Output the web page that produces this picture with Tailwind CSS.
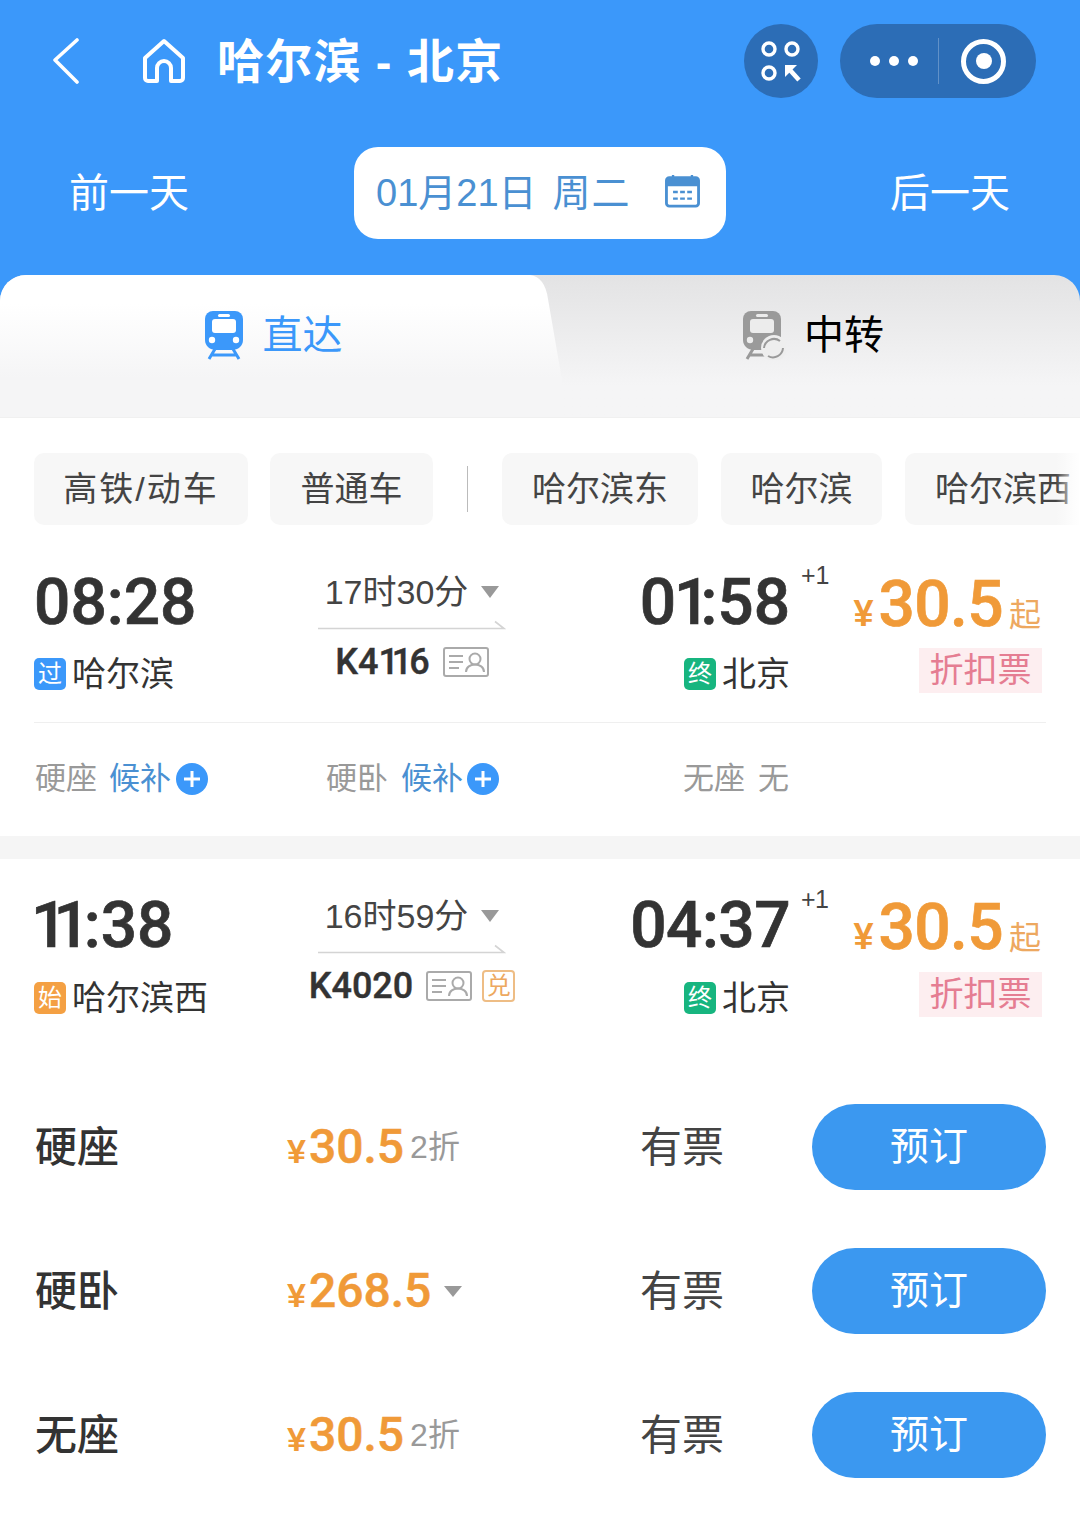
<!DOCTYPE html>
<html lang="zh-CN">
<head>
    <meta charset="UTF-8">
    <meta name="viewport" content="width=device-width, initial-scale=1.0">
    <title>哈尔滨 - 北京</title>
    <script src="https://cdn.jsdelivr.net/npm/@tailwindcss/browser@4"></script>
</head>
<body class="bg-white font-['Liberation_Sans','Noto_Sans_CJK_SC',sans-serif] text-[#333]">
<div class="w-[1080px] h-[1526px] overflow-hidden">

    <!-- blue header -->
    <header class="bg-[#3b98fa] h-[275px] pt-[24px]">
        <div class="flex items-center h-[74px] pl-[52px] pr-[44px]">
            <svg class="w-[28px] h-[46px]" viewBox="0 0 28 46" fill="none" stroke="#fff" stroke-width="3.6" stroke-linecap="round" stroke-linejoin="round"><path d="M25 2 3 22l22 22"/></svg>
            <svg class="ml-[61px] w-[46px] h-[46px]" viewBox="0 0 46 46" fill="none" stroke="#fff" stroke-width="4" stroke-linejoin="round" stroke-linecap="round"><path d="M23 3 4 20v20a3 3 0 0 0 3 3h9V30a7 7 0 0 1 14 0v13h9a3 3 0 0 0 3-3V20Z"/></svg>
            <h1 class="ml-[30px] text-[47px] font-bold text-white leading-none tracking-[1.2px] whitespace-pre">哈尔滨 - 北京</h1>
            <div class="ml-auto flex items-center gap-[22px]">
                <div class="w-[74px] h-[74px] rounded-full bg-[#2c6db6] flex items-center justify-center">
                    <svg class="w-[44px] h-[44px]" viewBox="0 0 44 44" fill="none" stroke="#fff" stroke-width="3.4">
                        <circle cx="10" cy="10" r="6"/><circle cx="33" cy="10" r="6"/><circle cx="10" cy="34" r="6"/>
                        <path d="M26 26h12L26 38Z" fill="#fff" stroke="none"/>
                        <path d="M30 30l10 11" stroke-width="4.6"/>
                    </svg>
                </div>
                <div class="w-[196px] h-[74px] rounded-full bg-[#2c6db6] flex items-center">
                    <div class="w-[98px] flex justify-center gap-[9px] pl-[10px]">
                        <span class="w-[10px] h-[10px] rounded-full bg-white"></span>
                        <span class="w-[10px] h-[10px] rounded-full bg-white"></span>
                        <span class="w-[10px] h-[10px] rounded-full bg-white"></span>
                    </div>
                    <span class="w-px h-[46px] bg-white/25"></span>
                    <div class="flex-1 flex justify-center pr-[8px]">
                        <span class="w-[45px] h-[45px] rounded-full border-[5px] border-white flex items-center justify-center">
                            <span class="w-[16px] h-[16px] rounded-full bg-white"></span>
                        </span>
                    </div>
                </div>
            </div>
        </div>
        <div class="flex items-center justify-between mt-[49px] pl-[69px] pr-[70px]">
            <span class="text-[40px] text-white w-[121px]">前一天</span>
            <div class="w-[372px] h-[92px] rounded-[24px] bg-white flex items-center pl-[22px] text-[#4a90d2] text-[38px]">
                <span>01月21日</span>
                <span class="ml-[16px] tracking-[1px]">周二</span>
                <svg class="ml-[33px] mb-[4px] w-[37px] h-[34px]" viewBox="0 0 38 36" fill="none">
                    <rect x="2" y="4" width="34" height="30" rx="3" stroke="#4a90d2" stroke-width="3"/>
                    <path d="M2 5h34v8H2z" fill="#4a90d2"/>
                    <path d="M9 1v5M29 1v5" stroke="#4a90d2" stroke-width="2.5"/>
                    <path d="M9 19h20M9 26h20" stroke="#4a90d2" stroke-width="2.5" stroke-dasharray="5 2.5"/>
                </svg>
            </div>
            <span class="text-[40px] text-white w-[120px]">后一天</span>
        </div>
    </header>

    <!-- tabs -->
    <div class="bg-[#3b98fa]">
        <div class="relative h-[143px] rounded-t-[26px] overflow-hidden bg-gradient-to-b from-[#e3e3e4] to-[#f5f5f6] to-[78%] border-b border-[#f0f0f0]">
            <svg class="absolute left-0 top-0 w-[570px] h-[143px]" viewBox="0 0 570 143">
                <defs><linearGradient id="activeTab" x1="0" y1="0" x2="0" y2="1"><stop offset="0" stop-color="#fff"/><stop offset=".2" stop-color="#fff"/><stop offset=".72" stop-color="#f5f5f6"/></linearGradient></defs>
                <path d="M0 0H530Q545 2 548 24L562 105V143H0Z" fill="url(#activeTab)"/>
            </svg>
            <div class="relative grid grid-cols-[546px_534px] pt-[36px]">
                <div class="flex items-center justify-center gap-[19px] h-[48px]">
                    <svg class="w-[40px] h-[49px]" viewBox="0 0 40 49">
                        <path d="M9 0h22a8 8 0 0 1 8 8v21c0 6-5 10-11 10H12C6 39 1 35 1 29V8a8 8 0 0 1 8-8Z" fill="#3b98fa"/>
                        <rect x="8" y="8" width="24" height="14" rx="3" fill="#fff"/>
                        <rect x="14" y="3" width="12" height="3" rx="1.5" fill="#fff"/>
                        <circle cx="8" cy="29" r="3.2" fill="#fff"/><circle cx="32" cy="29" r="3.2" fill="#fff"/>
                        <path d="M11 38 5 48M29 38l6 10M8 44h24" stroke="#3b98fa" stroke-width="3" fill="none"/>
                    </svg>
                    <span class="text-[40px] text-[#3b98fa]">直达</span>
                </div>
                <div class="flex items-center justify-center gap-[18px] h-[48px]">
                    <svg class="w-[44px] h-[49px]" viewBox="0 0 44 49">
                        <path d="M9 0h22a8 8 0 0 1 8 8v21c0 6-5 10-11 10H12C6 39 1 35 1 29V8a8 8 0 0 1 8-8Z" fill="#9a9a9a"/>
                        <rect x="8" y="8" width="24" height="14" rx="3" fill="#ececec"/>
                        <rect x="14" y="3" width="12" height="3" rx="1.5" fill="#ececec"/>
                        <circle cx="8" cy="29" r="3.2" fill="#ececec"/>
                        <path d="M11 38 5 48M8 44h16" stroke="#9a9a9a" stroke-width="3" fill="none"/>
                        <circle cx="32" cy="37" r="13" fill="#eeeeee"/>
                        <path d="M38 30a10 10 0 0 0-16 7M26 45a10 10 0 0 0 15-8" stroke="#9a9a9a" stroke-width="2" fill="none"/>
                    </svg>
                    <span class="text-[40px] text-black">中转</span>
                </div>
            </div>
        </div>
    </div>

    <!-- filter chips -->
    <div class="relative flex items-center pl-[34px] pt-[35px] h-[107px] overflow-hidden text-[34px] text-[#444]">
        <span class="w-[214px] h-[72px] shrink-0 rounded-[10px] bg-[#f7f7f7] flex items-center justify-center tracking-[2px]">高铁/动车</span>
        <span class="ml-[22px] w-[163px] h-[72px] shrink-0 rounded-[10px] bg-[#f7f7f7] flex items-center justify-center">普通车</span>
        <span class="ml-[34px] w-px h-[46px] shrink-0 bg-[#bbb]"></span>
        <span class="ml-[34px] w-[196px] h-[72px] shrink-0 rounded-[10px] bg-[#f7f7f7] flex items-center justify-center">哈尔滨东</span>
        <span class="ml-[23px] w-[161px] h-[72px] shrink-0 rounded-[10px] bg-[#f7f7f7] flex items-center justify-center">哈尔滨</span>
        <span class="ml-[23px] w-[196px] h-[72px] shrink-0 rounded-[10px] bg-[#f7f7f7] flex items-center justify-center">哈尔滨西</span>
        <span class="absolute right-0 top-[35px] w-[24px] h-[72px] bg-gradient-to-r from-white/0 to-white"></span>
    </div>

    <!-- K4116 -->
    <section class="grid grid-cols-[284px_188px_284px_252px] pl-[34px] pt-[44px]">
        <div>
            <div class="h-[64px] font-['Roboto',sans-serif] font-medium text-[64px] leading-[68px] text-[#333] [-webkit-text-stroke:0.7px_currentColor]">08:28</div>
            <div class="flex items-center gap-[6px] mt-[23px] h-[36px] text-[34px]">
                <span class="w-[32px] h-[32px] rounded-[5px] bg-[#3b98fa] text-white text-[24px] flex items-center justify-center">过</span>哈尔滨
            </div>
        </div>
        <div class="flex flex-col items-center pt-[3px]">
            <div class="flex items-center gap-[13px] h-[40px] text-[34px] text-[#444]">
                <span>17时30分</span>
                <svg class="w-[18px] h-[12px]" viewBox="0 0 18 12"><path d="M0 0h18l-9 12Z" fill="#999"/></svg>
            </div>
            <svg class="w-[188px] h-[10px] mt-[8px]" viewBox="0 0 188 10" fill="none" stroke="#d4d4d4" stroke-width="1.6"><path d="M0 8.5h186l-9-7"/></svg>
            <div class="flex items-center gap-[13px] mt-[14px] h-[36px] font-['Roboto',sans-serif] font-medium text-[36px] text-[#333]">
                <span class="[-webkit-text-stroke:0.4px_currentColor]">K4<span class="tracking-[-7px]">11</span><span class="ml-[4px]">6</span></span>
                <svg class="w-[46px] h-[30px]" viewBox="0 0 46 30" fill="none" stroke="#aaa" stroke-width="2"><rect x="1" y="1" width="44" height="28" rx="2"/><path d="M6 9h14M6 15h14M6 21h10"/><circle cx="32" cy="12" r="5.5"/><path d="M23 25c0-10 18-10 18 0"/></svg>
            </div>
        </div>
        <div class="flex flex-col items-end">
            <div class="relative h-[64px] font-['Roboto',sans-serif] font-medium text-[64px] leading-[68px] text-[#333] [-webkit-text-stroke:0.7px_currentColor]"><span class="tracking-[-2px]">0</span><span class="tracking-[-10px]">1</span>:58<span class="absolute left-[calc(100%+11px)] top-[-9px] font-['Liberation_Sans'] font-normal text-[25px] leading-[30px] text-[#444] [-webkit-text-stroke:0]">+1</span></div>
            <div class="flex items-center gap-[6px] mt-[23px] h-[36px] text-[34px]">
                <span class="w-[32px] h-[32px] rounded-[5px] bg-[#17b57f] text-white text-[24px] flex items-center justify-center">终</span>北京
            </div>
        </div>
        <div class="flex flex-col items-end">
            <div class="flex items-baseline h-[64px] leading-[72px] text-[#f09a38] pr-[1px]">
                <span class="text-[36px] font-bold">¥</span>
                <span class="ml-[5px] font-['Roboto',sans-serif] font-medium text-[64px] tracking-[-0.6px] [-webkit-text-stroke:0.7px_currentColor]">30.5</span>
                <span class="ml-[6px] text-[32px] text-[#eda860]">起</span>
            </div>
            <span class="mt-[15px] w-[123px] h-[45px] bg-[#fdeef0] text-[#e57d92] text-[34px] flex items-center justify-center">折扣票</span>
        </div>
    </section>
    <div class="mx-[34px] mt-[29px] h-px bg-[#efefef]"></div>
    <div class="grid grid-cols-[291px_357px_1fr] pl-[35px] pt-[36px] h-[113px] text-[31px] text-[#999]">
        <div class="flex items-center h-[40px]">硬座<span class="ml-[12px] text-[#4a90d2]">候补</span>
            <svg class="ml-[5px] w-[32px] h-[32px]" viewBox="0 0 32 32"><circle cx="16" cy="16" r="16" fill="#3b98fa"/><path d="M8 16h16M16 8v16" stroke="#fff" stroke-width="3"/></svg>
        </div>
        <div class="flex items-center h-[40px]">硬卧<span class="ml-[13px] text-[#4a90d2]">候补</span>
            <svg class="ml-[4px] w-[32px] h-[32px]" viewBox="0 0 32 32"><circle cx="16" cy="16" r="16" fill="#3b98fa"/><path d="M8 16h16M16 8v16" stroke="#fff" stroke-width="3"/></svg>
        </div>
        <div class="flex items-center h-[40px]">无座<span class="ml-[13px]">无</span></div>
    </div>
    <div class="h-[23px] bg-[#f5f5f5]"></div>

    <!-- K4020 -->
    <section class="grid grid-cols-[284px_188px_284px_252px] pl-[34px] pt-[34px]">
        <div>
            <div class="h-[64px] -ml-[3px] font-['Roboto',sans-serif] font-medium text-[64px] leading-[66px] text-[#333] [-webkit-text-stroke:0.7px_currentColor]"><span class="tracking-[-14px]">1</span><span class="tracking-[-6px]">1</span>:38</div>
            <div class="flex items-center gap-[6px] ml-[0px] mt-[23px] h-[36px] text-[34px]">
                <span class="w-[32px] h-[32px] rounded-[5px] bg-[#f4a043] text-white text-[24px] flex items-center justify-center">始</span>哈尔滨西
            </div>
        </div>
        <div class="flex flex-col items-center pt-[3px]">
            <div class="flex items-center gap-[13px] h-[40px] text-[34px] text-[#444]">
                <span>16时59分</span>
                <svg class="w-[18px] h-[12px]" viewBox="0 0 18 12"><path d="M0 0h18l-9 12Z" fill="#999"/></svg>
            </div>
            <svg class="w-[188px] h-[10px] mt-[8px]" viewBox="0 0 188 10" fill="none" stroke="#d4d4d4" stroke-width="1.6"><path d="M0 8.5h186l-9-7"/></svg>
            <div class="flex items-center gap-[13px] mt-[14px] h-[36px] text-[36px] text-[#333] whitespace-nowrap">
                <span class="font-['Roboto',sans-serif] font-medium [-webkit-text-stroke:0.4px_currentColor]">K4020</span>
                <svg class="w-[46px] h-[30px] shrink-0" viewBox="0 0 46 30" fill="none" stroke="#aaa" stroke-width="2"><rect x="1" y="1" width="44" height="28" rx="2"/><path d="M6 9h14M6 15h14M6 21h10"/><circle cx="32" cy="12" r="5.5"/><path d="M23 25c0-10 18-10 18 0"/></svg>
                <span class="-ml-[3px] w-[33px] h-[32px] shrink-0 rounded-[4px] border-2 border-[#eebd85] text-[#eda860] text-[24px] flex items-center justify-center">兑</span>
            </div>
        </div>
        <div class="flex flex-col items-end">
            <div class="relative h-[64px] font-['Roboto',sans-serif] font-medium text-[64px] leading-[66px] tracking-[-0.5px] text-[#333] [-webkit-text-stroke:0.7px_currentColor]">04:37<span class="absolute left-[calc(100%+11px)] top-[-9px] font-['Liberation_Sans'] font-normal text-[25px] leading-[30px] text-[#444] [-webkit-text-stroke:0]">+1</span></div>
            <div class="flex items-center gap-[6px] mt-[23px] h-[36px] text-[34px]">
                <span class="w-[32px] h-[32px] rounded-[5px] bg-[#17b57f] text-white text-[24px] flex items-center justify-center">终</span>北京
            </div>
        </div>
        <div class="flex flex-col items-end">
            <div class="flex items-baseline h-[64px] leading-[70px] text-[#f09a38] pr-[1px]">
                <span class="text-[36px] font-bold">¥</span>
                <span class="ml-[5px] font-['Roboto',sans-serif] font-medium text-[64px] tracking-[-0.6px] [-webkit-text-stroke:0.7px_currentColor]">30.5</span>
                <span class="ml-[6px] text-[32px] text-[#eda860]">起</span>
            </div>
            <span class="mt-[15px] w-[123px] h-[45px] bg-[#fdeef0] text-[#e57d92] text-[34px] flex items-center justify-center">折扣票</span>
        </div>
    </section>

    <!-- seats -->
    <div class="mt-[87px] flex flex-col gap-[58px] pl-[35px] pr-[34px]">
        <div class="flex items-center h-[86px]">
            <span class="w-[252px] text-[42px] font-medium">硬座</span>
            <div class="w-[353px] flex items-baseline text-[#f09a38]">
                <span class="text-[34px] font-bold">¥</span><span class="font-['Roboto',sans-serif] font-medium text-[48px] ml-[3px] [-webkit-text-stroke:0.5px_currentColor]">30.5</span><span class="ml-[6px] self-center text-[32px] text-[#999]">2折</span>
            </div>
            <span class="text-[42px] text-[#444]">有票</span>
            <button class="ml-auto w-[234px] h-[86px] rounded-full bg-[#3b98f0] text-white text-[39px]">预订</button>
        </div>
        <div class="flex items-center h-[86px]">
            <span class="w-[252px] text-[42px] font-medium">硬卧</span>
            <div class="w-[353px] flex items-baseline text-[#f09a38]">
                <span class="text-[34px] font-bold">¥</span><span class="font-['Roboto',sans-serif] font-medium text-[48px] ml-[3px] [-webkit-text-stroke:0.5px_currentColor]">268.5</span>
                <svg class="ml-[13px] w-[18px] h-[11px] self-center" viewBox="0 0 18 11"><path d="M0 0h18l-9 11Z" fill="#999"/></svg>
            </div>
            <span class="text-[42px] text-[#444]">有票</span>
            <button class="ml-auto w-[234px] h-[86px] rounded-full bg-[#3b98f0] text-white text-[39px]">预订</button>
        </div>
        <div class="flex items-center h-[86px]">
            <span class="w-[252px] text-[42px] font-medium">无座</span>
            <div class="w-[353px] flex items-baseline text-[#f09a38]">
                <span class="text-[34px] font-bold">¥</span><span class="font-['Roboto',sans-serif] font-medium text-[48px] ml-[3px] [-webkit-text-stroke:0.5px_currentColor]">30.5</span><span class="ml-[6px] self-center text-[32px] text-[#999]">2折</span>
            </div>
            <span class="text-[42px] text-[#444]">有票</span>
            <button class="ml-auto w-[234px] h-[86px] rounded-full bg-[#3b98f0] text-white text-[39px]">预订</button>
        </div>
    </div>
</div>
</body>
</html>
